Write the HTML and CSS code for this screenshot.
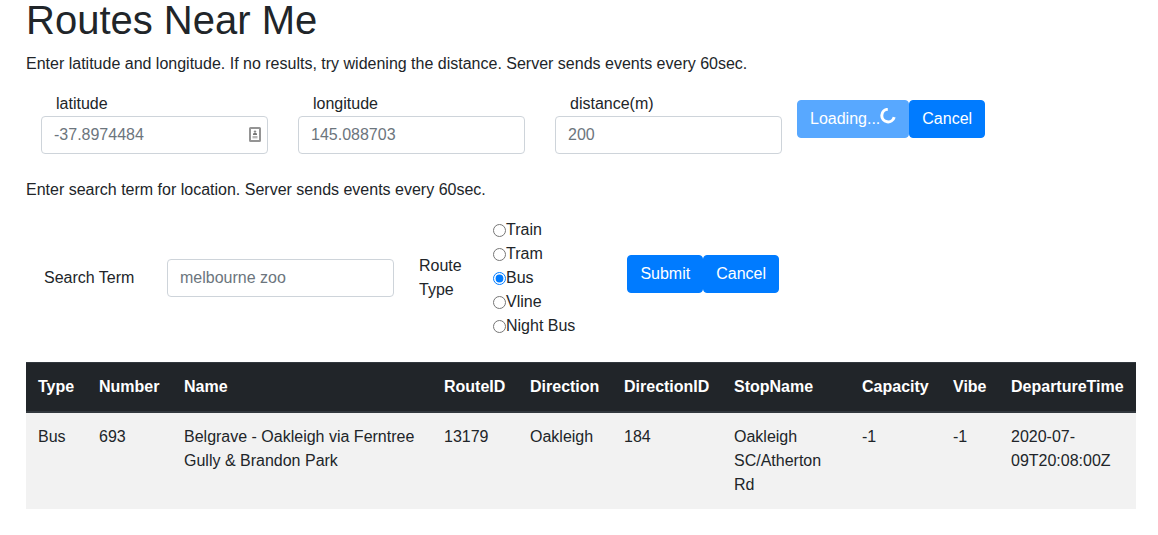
FILE: index.html
```html
<!DOCTYPE html>
<html lang="en">
<head>
<meta charset="utf-8">
<meta name="viewport" content="width=device-width, initial-scale=1">
<title>Routes Near Me</title>
<link rel="stylesheet" href="styles.css">
</head>
<body>
<main class="page">
  <h1 class="title">Routes Near Me</h1>
  <p class="intro">Enter latitude and longitude. If no results, try widening the distance. Server sends events every 60sec.</p>
  <form class="coords">
    <div class="field">
      <label class="field-label" for="latitude">latitude</label>
      <div class="input-wrap">
        <input class="input" id="latitude" type="text" placeholder="-37.8974484">
        <svg class="autofill" viewBox="0 0 12 15" aria-hidden="true">
          <rect x="1" y="1" width="10" height="13" rx="0.5" fill="#fff" stroke="#949494" stroke-width="2"/>
          <circle cx="6" cy="4.6" r="1.2" fill="#8c8c8c"/>
          <path d="M4 8V7Q4 6 5.2 6H6.8Q8 6 8 7V8Z" fill="#777"/>
          <path d="M3.5 10.2h5" stroke="#b8b8b8" stroke-width="2.4"/>
        </svg>
      </div>
    </div>
    <div class="field">
      <label class="field-label" for="longitude">longitude</label>
      <input class="input" id="longitude" type="text" placeholder="145.088703">
    </div>
    <div class="field">
      <label class="field-label" for="distance">distance(m)</label>
      <input class="input" id="distance" type="text" placeholder="200">
    </div>
    <div class="actions coords-actions">
      <button class="btn" type="submit" disabled>Loading...<svg class="spinner" viewBox="0 0 16 16" aria-hidden="true"><path d="M7.8 1.3A6.3 6.3 0 1 0 14.2 9.2" fill="none" stroke="#fff" stroke-width="3"/></svg></button>
      <button class="btn" type="button">Cancel</button>
    </div>
  </form>
  <p class="intro">Enter search term for location. Server sends events every 60sec.</p>
  <form class="search">
    <label class="search-label" for="term">Search Term</label>
    <input class="input search-input" id="term" type="text" placeholder="melbourne zoo">
    <div class="type-label" id="type-label">Route Type</div>
    <div class="types" role="radiogroup" aria-labelledby="type-label">
      <label class="type"><input class="radio" type="radio" name="type">Train</label>
      <label class="type"><input class="radio" type="radio" name="type">Tram</label>
      <label class="type"><input class="radio" type="radio" name="type" checked>Bus</label>
      <label class="type"><input class="radio" type="radio" name="type">Vline</label>
      <label class="type"><input class="radio" type="radio" name="type">Night Bus</label>
    </div>
    <div class="actions search-actions">
      <button class="btn" type="submit">Submit</button>
      <button class="btn" type="button">Cancel</button>
    </div>
  </form>
  <table class="routes">
    <colgroup>
      <col class="col-type"><col class="col-number"><col class="col-name"><col class="col-route"><col class="col-direction"><col class="col-direction-id"><col class="col-stop"><col class="col-capacity"><col class="col-vibe"><col>
    </colgroup>
    <thead>
      <tr><th>Type</th><th>Number</th><th>Name</th><th>RouteID</th><th>Direction</th><th>DirectionID</th><th>StopName</th><th>Capacity</th><th>Vibe</th><th>DepartureTime</th></tr>
    </thead>
    <tbody>
      <tr><td>Bus</td><td>693</td><td>Belgrave - Oakleigh via Ferntree Gully &amp; Brandon Park</td><td>13179</td><td>Oakleigh</td><td>184</td><td>Oakleigh SC/Atherton Rd</td><td>-1</td><td>-1</td><td>2020-07-09T20:08:00Z</td></tr>
    </tbody>
  </table>
</main>
</body>
</html>
```
FILE: styles.css
```css
*, *::before, *::after { box-sizing: border-box; }

body {
  margin: 0;
  background: #fff;
  color: #212529;
  font: 16px/24px "Liberation Sans", Arial, sans-serif;
}

.page { padding: 0 22px 24px 26px; }

.title {
  margin: 0 0 12px;
  font-size: 40px;
  font-weight: 400;
  line-height: 40px;
}

.intro { margin: 0 0 16px; }

.coords {
  display: flex;
  flex-wrap: wrap;
  align-items: flex-start;
  margin-bottom: 24px;
}

.field { width: 257px; padding: 0 15px; }
.field-label { display: block; padding-left: 15px; }

.input {
  display: block;
  width: 100%;
  height: 38px;
  margin: 0;
  padding: 6px 12px;
  border: 1px solid #ced4da;
  border-radius: 4px;
  background: #fff;
  color: #495057;
  font: inherit;
}
.input::placeholder { color: #6c757d; opacity: 1; }

.input-wrap { position: relative; }
.autofill {
  position: absolute;
  top: 11px;
  right: 7px;
  width: 12px;
  height: 15px;
}

.actions { display: flex; }
.coords-actions { margin-top: 8px; }
.search-actions { margin: 0 0 8px 52px; }

.btn {
  padding: 6px 12px;
  border: 1px solid #007bff;
  border-radius: 4px;
  background: #007bff;
  color: #fff;
  font: inherit;
  white-space: nowrap;
}
.btn:disabled { opacity: 0.65; }

.spinner {
  width: 16px;
  height: 16px;
  vertical-align: 0;
}

.search {
  display: flex;
  align-items: center;
  margin-bottom: 24px;
  padding-left: 18px;
}
.search-label { width: 123px; }
.search-input { width: 227px; }
.type-label { width: 50px; margin: 0 24px 0 25px; }

.type { display: flex; align-items: flex-start; }
.radio {
  width: 13px;
  height: 13px;
  margin: 6px 0 0;
  accent-color: #007bff;
}

.routes {
  width: 100%;
  border-collapse: collapse;
}
.routes th,
.routes td {
  padding: 12px;
  border-top: 1px solid #dee2e6;
  text-align: left;
  vertical-align: top;
}
.routes thead th {
  border-top-color: #32383e;
  border-bottom: 2px solid #32383e;
  background: #212529;
  color: #fff;
}
.routes tbody tr { background: #f2f2f2; }

.col-type { width: 61px; }
.col-number { width: 85px; }
.col-name { width: 260px; }
.col-route { width: 86px; }
.col-direction { width: 94px; }
.col-direction-id { width: 110px; }
.col-stop { width: 128px; }
.col-capacity { width: 91px; }
.col-vibe { width: 58px; }
```
